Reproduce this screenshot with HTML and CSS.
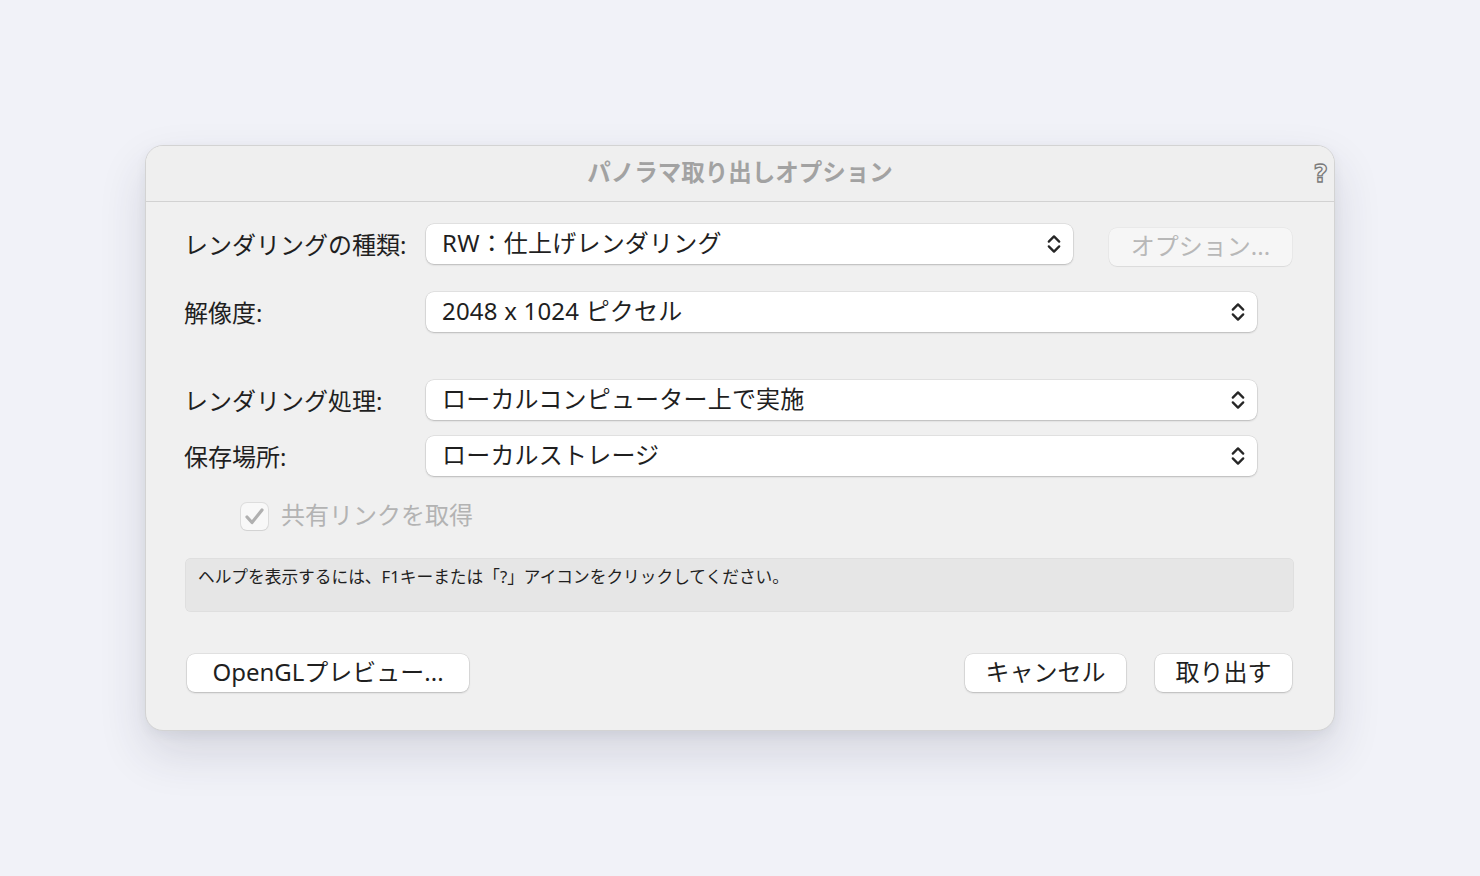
FILE: index.html
```html
<!DOCTYPE html>
<html lang="ja">
<head>
<meta charset="utf-8">
<title>パノラマ取り出しオプション</title>
<link rel="stylesheet" href="styles.css">
</head>
<body>
<div class="stage">
  <div class="dialog">
    <div class="titlebar">
      <span></span>
      <span class="title">パノラマ取り出しオプション</span>
      <span class="help-icon">?</span>
    </div>
    <div class="content">
      <div class="row row-type">
        <div class="label">レンダリングの種類:</div>
        <div class="select select-short"><span>RW：仕上げレンダリング</span>
          <svg class="chev" width="14" height="22" viewBox="0 0 14 22"><path d="M1.8 8.6 L7 3.4 L12.2 8.6 M1.8 13.4 L7 18.6 L12.2 13.4" fill="none" stroke="#262626" stroke-width="2.3" stroke-linecap="round" stroke-linejoin="round"/></svg>
        </div>
        <div class="btn btn-disabled">オプション...</div>
      </div>
      <div class="row row-res">
        <div class="label">解像度:</div>
        <div class="select"><span>2048 x 1024 ピクセル</span>
          <svg class="chev" width="14" height="22" viewBox="0 0 14 22"><path d="M1.8 8.6 L7 3.4 L12.2 8.6 M1.8 13.4 L7 18.6 L12.2 13.4" fill="none" stroke="#262626" stroke-width="2.3" stroke-linecap="round" stroke-linejoin="round"/></svg>
        </div>
      </div>
      <div class="row row-proc">
        <div class="label">レンダリング処理:</div>
        <div class="select"><span>ローカルコンピューター上で実施</span>
          <svg class="chev" width="14" height="22" viewBox="0 0 14 22"><path d="M1.8 8.6 L7 3.4 L12.2 8.6 M1.8 13.4 L7 18.6 L12.2 13.4" fill="none" stroke="#262626" stroke-width="2.3" stroke-linecap="round" stroke-linejoin="round"/></svg>
        </div>
      </div>
      <div class="row row-store">
        <div class="label">保存場所:</div>
        <div class="select"><span>ローカルストレージ</span>
          <svg class="chev" width="14" height="22" viewBox="0 0 14 22"><path d="M1.8 8.6 L7 3.4 L12.2 8.6 M1.8 13.4 L7 18.6 L12.2 13.4" fill="none" stroke="#262626" stroke-width="2.3" stroke-linecap="round" stroke-linejoin="round"/></svg>
        </div>
      </div>
      <div class="check-row">
        <div class="checkbox">
          <svg width="21" height="19" viewBox="0 0 21 19"><path d="M3 10 L8 15.5 L18 3" fill="none" stroke="#b0b0b0" stroke-width="3.2" stroke-linecap="round" stroke-linejoin="round"/></svg>
        </div>
        <span class="check-label">共有リンクを取得</span>
      </div>
      <div class="helpbox">ヘルプを表示するには、F1キーまたは「?」アイコンをクリックしてください。</div>
      <div class="buttons">
        <div class="btn btn-opengl">OpenGLプレビュー...</div>
        <div class="btn-group">
          <div class="btn btn-cancel">キャンセル</div>
          <div class="btn btn-export">取り出す</div>
        </div>
      </div>
    </div>
  </div>
</div>
</body>
</html>
```

FILE: styles.css
```css
* { box-sizing: border-box; }
html, body {
  margin: 0;
  padding: 0;
}
body {
  background: #f1f2f8;
  font-family: "Noto Sans", "Noto Sans CJK JP", sans-serif;
  color: #1f1f1f;
  width: 1480px;
  height: 876px;
  overflow: hidden;
}
.stage {
  padding: 145px 0 0 145px;
}
.dialog {
  width: 1190px;
  height: 586px;
  background: #f0f0f0;
  border: 1px solid #d3d3d3;
  border-radius: 18px;
  box-shadow: 0 22px 48px rgba(40, 44, 70, 0.14), 0 4px 12px rgba(40, 44, 70, 0.06);
  overflow: hidden;
}
.titlebar {
  height: 56px;
  border-bottom: 1px solid #d2d2d2;
  display: grid;
  grid-template-columns: 1fr auto 1fr;
  align-items: center;
  background: #efefef;
}
.title {
  font-family: "Noto Sans CJK JP", sans-serif;
  font-size: 23.5px;
  font-weight: 700;
  color: #a2a2a2;
  line-height: 1;
  padding-bottom: 4px;
}
.help-icon {
  justify-self: end;
  margin-right: 6px;
  font-family: "DejaVu Sans", sans-serif;
  font-size: 25px;
  font-weight: 700;
  color: transparent;
  -webkit-text-stroke: 1.3px #7a7a7a;
  line-height: 1;
}
.content {
  padding: 22px 42px 0 38px;
}
.row {
  display: flex;
  align-items: center;
  height: 40px;
}
.row-res { margin-top: 28px; }
.row-proc { margin-top: 48px; }
.row-store { margin-top: 16px; }
.label {
  width: 242px;
  flex: none;
  font-size: 24px;
  line-height: 1;
  padding-top: 2px;
  color: #1f1f1f;
}
.select {
  width: 831px;
  height: 40px;
  flex: none;
  background: #ffffff;
  border-radius: 8px;
  box-shadow: 0 0 0 0.5px rgba(0, 0, 0, 0.12), 0 1px 2px rgba(0, 0, 0, 0.18);
  display: flex;
  align-items: center;
  justify-content: space-between;
  padding: 0 12px 0 16px;
  font-size: 24px;
  color: #1f1f1f;
}
.select span {
  line-height: 1;
  padding-bottom: 3px;
  letter-spacing: 0.2px;
}
.select-short {
  width: 647px;
}
.chev { flex: none; }
.btn {
  height: 38px;
  background: #ffffff;
  border-radius: 8px;
  box-shadow: 0 0 0 0.5px rgba(0, 0, 0, 0.12), 0 1px 2px rgba(0, 0, 0, 0.18);
  display: flex;
  align-items: center;
  justify-content: center;
  font-size: 24px;
  line-height: 1;
  color: #1f1f1f;
  padding-bottom: 3px;
  flex: none;
}
.btn-disabled {
  margin-left: 36px;
  width: 183px;
  margin-top: 6px;
  background: #f6f6f6;
  color: #b8b8b8;
  box-shadow: 0 0 0 0.5px rgba(0, 0, 0, 0.06), 0 1px 1px rgba(0, 0, 0, 0.06);
}
.check-row {
  display: flex;
  align-items: center;
  margin-top: 27px;
  margin-left: 57px;
  height: 27px;
}
.checkbox {
  width: 27px;
  height: 27px;
  border-radius: 6px;
  background: #f8f8f8;
  box-shadow: 0 0 0 1px rgba(0, 0, 0, 0.08), 0 1px 1px rgba(0, 0, 0, 0.05);
  display: flex;
  align-items: center;
  justify-content: center;
}
.check-label {
  margin-left: 13px;
  font-size: 24px;
  color: #b3b3b3;
  line-height: 1;
  padding-bottom: 3px;
}
.helpbox {
  margin-top: 28px;
  margin-left: 1px;
  width: 1109px;
  height: 54px;
  background: #e6e6e6;
  border-radius: 6px;
  box-shadow: inset 0 0 0 0.5px rgba(0, 0, 0, 0.06);
  font-size: 16.7px;
  line-height: 22px;
  padding: 8px 13px 0;
  color: #1f1f1f;
}
.buttons {
  margin-top: 42px;
  display: flex;
  justify-content: space-between;
  padding-left: 3px;
  width: 1108px;
}
.btn-group {
  display: flex;
  gap: 29px;
}
.btn-opengl { width: 282px; }
.btn-cancel { width: 161px; }
.btn-export { width: 137px; }
```
